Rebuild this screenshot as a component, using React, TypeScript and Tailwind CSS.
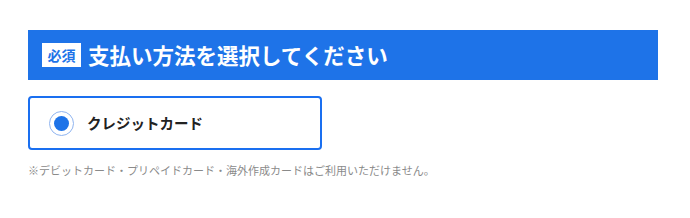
export default function App() {
  return (
    <div className="w-[690px] h-[218px] bg-white pt-[30px] px-[28px] font-['Noto_Sans_CJK_JP','Noto_Sans',sans-serif]">
      {/* Heading */}
      <div className="h-[50px] w-[630px] bg-[#1e73e8] flex items-center pl-[14px] gap-[7px]">
        <span className="h-[24px] w-[39px] bg-white text-[#1e73e8] text-[14px] font-bold flex items-center justify-center leading-none">
          必須
        </span>
        <h2 className="text-white text-[21.5px] font-bold leading-none">支払い方法を選択してください</h2>
      </div>

      {/* Option */}
      <label className="mt-[16px] w-[294px] h-[54px] border-2 border-[#1a6ff0] rounded-[4px] flex items-center pl-[19px] gap-[13px]">
        <span className="w-[25px] h-[25px] rounded-full border border-[#8fb4f0] flex items-center justify-center">
          <span className="w-[15px] h-[15px] rounded-full bg-[#1e73e8]" />
        </span>
        <span className="text-[14.5px] font-bold text-[#222]">クレジットカード</span>
      </label>

      {/* Note */}
      <p className="mt-[15px] text-[11px] text-[#8a8a8a] leading-none">
        ※デビットカード・プリペイドカード・海外作成カードはご利用いただけません。
      </p>
    </div>
  )
}
